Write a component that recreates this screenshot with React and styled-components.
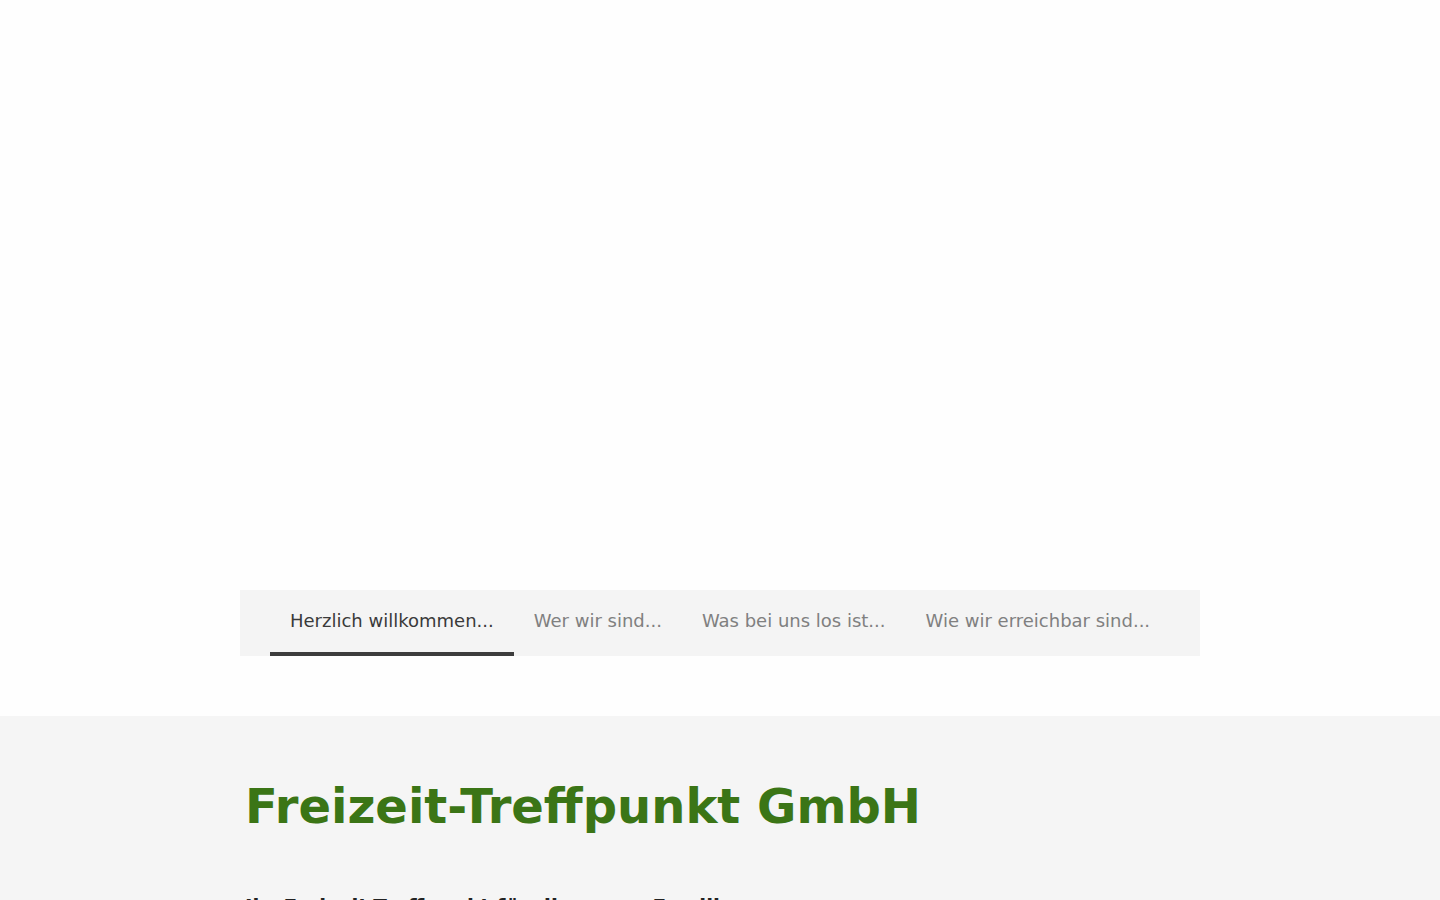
import React from 'react';
import styled, { createGlobalStyle } from 'styled-components';

const GlobalStyle = createGlobalStyle`
  html, body {
    margin: 0;
    padding: 0;
    background: #fefefe;
    font-family: "DejaVu Sans", "Liberation Sans", sans-serif;
  }
`;

const tabs = [
  'Herzlich willkommen...',
  'Wer wir sind...',
  'Was bei uns los ist...',
  'Wie wir erreichbar sind...',
];

const App = () => {
  return (
    <>
      <GlobalStyle />
      <Hero />
      <TabBar>
        <TabList>
          {tabs.map((t, i) => (
            <Tab key={t} active={i === 0}>{t}</Tab>
          ))}
        </TabList>
      </TabBar>
      <Section>
        <Inner>
          <Title>Freizeit-Treffpunkt GmbH</Title>
          <SubTitle>Ihr Freizeit-Treffpunkt für die ganze Familie</SubTitle>
        </Inner>
      </Section>
    </>
  );
};

const Hero = styled.div`
  height: 590px;
`;

const TabBar = styled.nav`
  width: 960px;
  margin: 0 auto;
  background: #f4f4f4;
`;

const TabList = styled.ul`
  display: flex;
  list-style: none;
  margin: 0;
  padding: 0 30px;
`;

const Tab = styled.li`
  padding: 0 20px;
  height: 62px;
  line-height: 62px;
  font-size: 18px;
  color: ${props => (props.active ? '#3a3a3a' : '#808080')};
  border-bottom: 4px solid ${props => (props.active ? '#3d3d3d' : 'transparent')};
  cursor: pointer;
  white-space: nowrap;
`;

const Section = styled.section`
  margin-top: 60px;
  background: #f5f5f5;
  min-height: 400px;
`;

const Inner = styled.div`
  width: 960px;
  margin: 0 auto;
  padding-top: 62px;
`;

const Title = styled.h1`
  margin: 0 0 0 5px;
  font-size: 48px;
  font-weight: bold;
  color: #3b7516;
`;

const SubTitle = styled.h2`
  margin: 60px 0 0 5px;
  font-size: 20px;
  font-weight: bold;
  color: #222;
`;

export default App;
